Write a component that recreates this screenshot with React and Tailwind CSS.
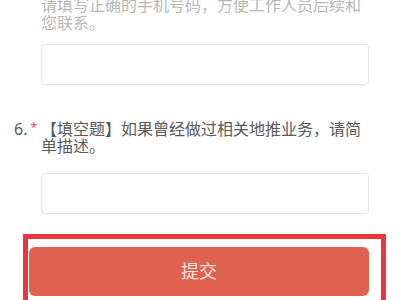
export default function App() {
  return (
    <div
      className="w-[400px] h-[300px] overflow-hidden bg-white"
      style={{ fontFamily: '"Noto Sans", "Noto Sans CJK SC", sans-serif' }}
    >
      <p className="-mt-[4px] pl-[41px] w-[369px] text-[16px] leading-[18px] text-[#b8b8b8]">
        请填写正确的手机号码，方便工作人员后续和您联系。
      </p>
      <div className="mt-[12px] ml-[41px] w-[328px] h-[41px] rounded-[4px] border border-[#e6e6e6] shadow-[0_1px_2px_rgba(0,0,0,0.05)]" />
      <div className="mt-[36px] flex text-[16px] leading-[17px] text-[#5a5a5a]">
        <div className="w-[41px] pl-[14px] flex items-start">
          <span>6.</span>
          <span className="ml-[3px] text-[12px] leading-[14px] text-[#e5484d]">*</span>
        </div>
        <p className="w-[328px]">【填空题】如果曾经做过相关地推业务，请简单描述。</p>
      </div>
      <div className="mt-[18px] ml-[41px] w-[328px] h-[41px] rounded-[4px] border border-[#e6e6e6] shadow-[0_1px_2px_rgba(0,0,0,0.05)]" />
      <div className="mt-[20px] ml-[23px] w-[363px] h-[80px] border-[5px] border-[#e8383f] pl-[1px] pt-[8px]">
        <button className="w-[340px] h-[49px] rounded-[6px] bg-[#e0614f] text-[#f9e8e4] text-[18px] leading-[49px] flex items-center justify-center">
          提交
        </button>
      </div>
    </div>
  );
}
